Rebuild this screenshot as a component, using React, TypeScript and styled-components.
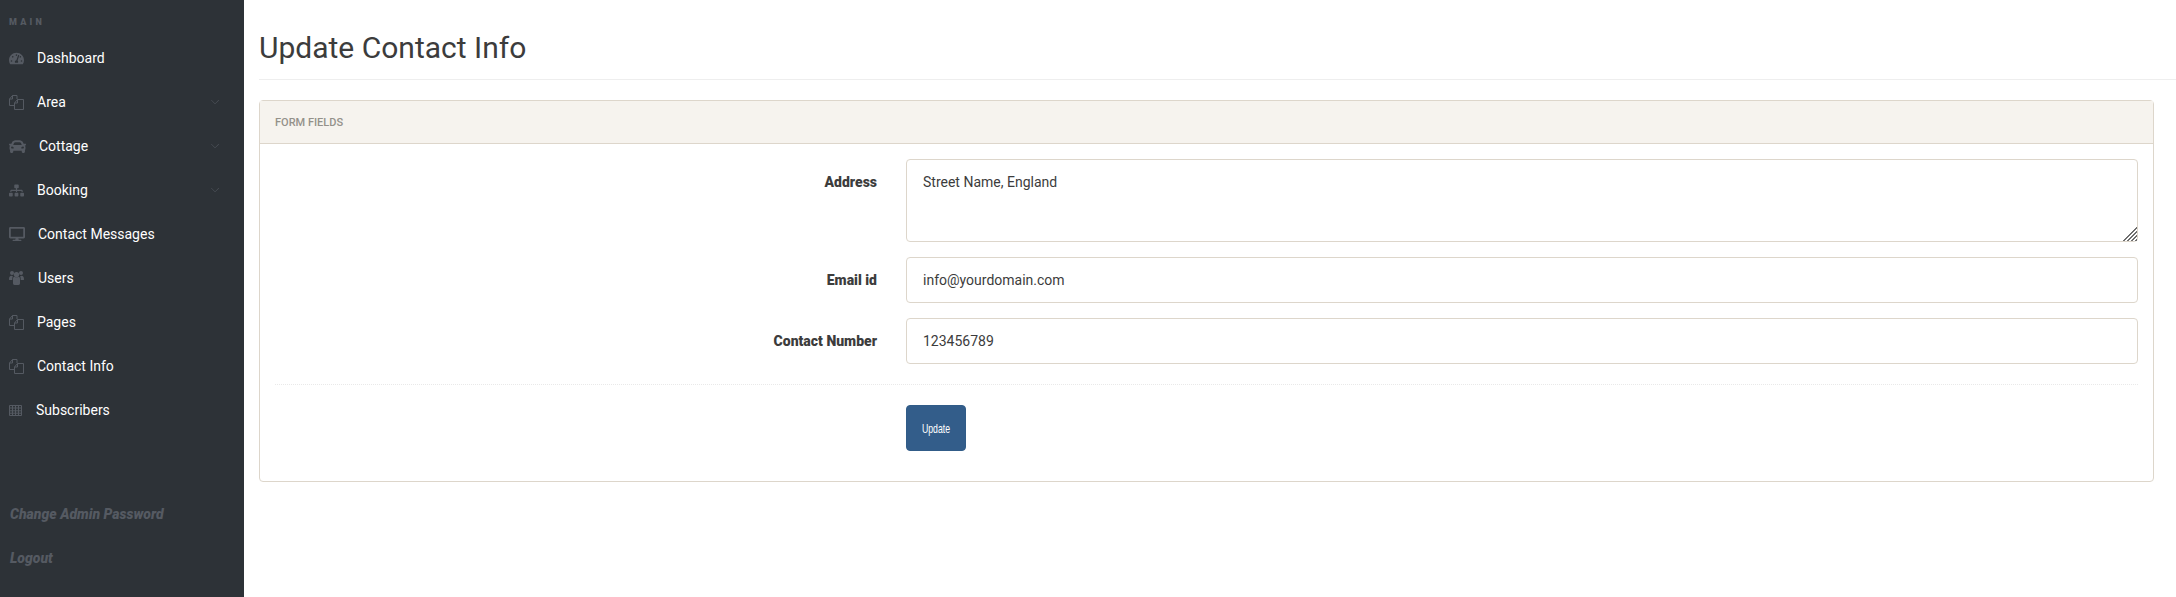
import React from "react";
import styled, { createGlobalStyle } from "styled-components";
import { FaTachometerAlt, FaCar, FaSitemap, FaDesktop } from "react-icons/fa";
import { SlArrowDown } from "react-icons/sl";

const GlobalStyle = createGlobalStyle`
  html, body {
    margin: 0;
    height: 100%;
    background: #fff;
    font-family: Roboto, "Liberation Sans", sans-serif;
    font-size: 14px;
    color: #3c3c3c;
  }
  * { box-sizing: border-box; }
`;

const Page = styled.div`
  display: flex;
  height: 597px;
  overflow: hidden;
`;

const Sidebar = styled.aside`
  width: 244px;
  flex: none;
  background: #2d3237;
  display: flex;
  flex-direction: column;
  padding-top: 17px;
`;

const SectionLabel = styled.div`
  padding-left: 9px;
  height: 11px;
  line-height: 11px;
  font-size: 9px;
  font-weight: 900;
  letter-spacing: 3.2px;
  color: #555a62;
  margin-bottom: 8px;
`;

const NavList = styled.nav`
  display: flex;
  flex-direction: column;
`;

const NavRow = styled.a`
  display: flex;
  align-items: center;
  height: 44px;
  padding: 0 25px 0 9px;
  gap: 13px;
  color: #fff;
  font-size: 14px;
  text-decoration: none;
`;

const NavIcon = styled.span<{ $width: number }>`
  display: flex;
  align-items: center;
  width: ${({ $width }) => $width}px;
  color: #555a62;
  font-size: 15px;
  flex: none;
`;

const NavText = styled.span`
  flex: 1;
`;

const Chevron = styled.span`
  display: flex;
  color: #50555c;
  font-size: 8px;
`;

const BottomLinks = styled.div`
  margin-top: 60px;
  display: flex;
  flex-direction: column;
`;

const BottomLink = styled.a`
  height: 44px;
  line-height: 44px;
  padding-left: 10px;
  font-size: 14px;
  font-weight: 900;
  font-style: italic;
  color: #555a62;
`;

const Main = styled.main`
  flex: 1;
  min-width: 0;
  padding-left: 15px;
`;

const TitleBar = styled.header`
  height: 80px;
  padding-top: 28px;
  border-bottom: 1px solid #eeeeee;
`;

const Title = styled.h1`
  margin: 0;
  font-size: 30px;
  line-height: 40px;
  font-weight: 400;
  color: #3c3c3c;
`;

const Panel = styled.section`
  margin: 20px 22px 0 0;
  border: 1px solid #ddd6cb;
  border-radius: 4px;
`;

const PanelHeader = styled.div`
  height: 43px;
  padding-left: 15px;
  display: flex;
  align-items: center;
  background: #f6f3ee;
  border-bottom: 1px solid #ddd6cb;
  font-size: 11px;
  font-weight: 500;
  color: #94918a;
`;

const PanelBody = styled.form`
  padding: 15px 15px 30px 0;
`;

const FormRow = styled.div`
  display: grid;
  grid-template-columns: 617px 1fr;
  column-gap: 29px;
  & + & {
    margin-top: 15px;
  }
`;

const FieldLabel = styled.label`
  text-align: right;
  font-size: 14px;
  font-weight: 900;
  line-height: 20px;
  padding-top: 13px;
  color: #3c3c3c;
`;

const fieldStyles = `
  display: block;
  width: 100%;
  border: 1px solid #ddd6cb;
  border-radius: 4px;
  padding: 12px 16px;
  font-family: Roboto, "Liberation Sans", sans-serif;
  font-size: 14px;
  line-height: 20px;
  color: #3c3c3c;
  background: #fff;
  outline: none;
`;

const TextArea = styled.textarea`
  ${fieldStyles}
  height: 83px;
  resize: vertical;
  &::-webkit-resizer {
    background:
      linear-gradient(135deg, #fff 50%, transparent 50%),
      repeating-linear-gradient(135deg, #6e6e6e 0 1.4px, #fff 1.4px 2.8px);
  }
`;

const TextInput = styled.input`
  ${fieldStyles}
  height: 46px;
`;

const Divider = styled.div`
  border-top: 1px dotted #e9e9e9;
  margin: 20px 0 20px 15px;
`;

const SubmitButton = styled.button`
  display: block;
  width: 60px;
  height: 46px;
  padding: 0;
  border: 1px solid #315c88;
  border-radius: 4px;
  background: #335d8a;
  color: #fff;
  font-family: "Liberation Sans", sans-serif;
  font-size: 13px;
`;

const ButtonLabel = styled.span`
  display: inline-block;
  transform: scaleX(0.67);
`;

const PagesIcon = () => (
  <svg width="15" height="15" viewBox="0 0 15 15" fill="none" stroke="currentColor" strokeWidth="1">
    <path d="M5.5 10.5H.5V4L3.5.5H8V4" />
    <path d="M3.5.5V4H.5" />
    <path d="M5.5 14.5V8L8.5 4.5H14.5V14.5Z" />
    <path d="M8.5 4.5V8H5.5" />
  </svg>
);

const UsersIcon = () => (
  <svg width="15" height="14" viewBox="0 0 15 14" fill="currentColor">
    <circle cx="3" cy="2" r="2" />
    <circle cx="12" cy="2" r="2" />
    <circle cx="7.5" cy="3.6" r="2.7" />
    <path d="M0 8.6C0 6 .8 4.8 2.4 4.8c.6 0 1 .2 1.5.5-.4.7-.6 1.5-.6 2.6v1.2H1C.4 9.1 0 9 0 8.6ZM15 8.6c0-2.6-.8-3.8-2.4-3.8-.6 0-1 .2-1.5.5.4.7.6 1.5.6 2.6v1.2H14c.6 0 1-.1 1-.5Z" />
    <path d="M4 8c0-1.5.6-2.3 1.5-2.3.5.4 1.200.6 2 .6s1.500-.2 2-.6C10.400 5.700 11 6.500 11 8v4.300c0 1-.6 1.700-1.500 1.700h-4C4.600 14 4 13.300 4 12.300Z" />
  </svg>
);

const TableIcon = () => (
  <svg width="13" height="11" viewBox="0 0 13 11" fill="none" stroke="currentColor" strokeWidth="1">
    <path d="M.5.5h12v10H.5ZM.5 3h12M.5 5.800h12M.5 8.200h12M3.500.5v10M6.500.5v10M9.500.5v10" />
  </svg>
);

const navItems = [
  { label: "Dashboard", icon: <FaTachometerAlt />, width: 15 },
  { label: "Area", icon: <PagesIcon />, width: 15, sub: true },
  { label: "Cottage", icon: <FaCar size={17} />, width: 17, sub: true },
  { label: "Booking", icon: <FaSitemap />, width: 15, sub: true },
  { label: "Contact Messages", icon: <FaDesktop size={16} />, width: 16 },
  { label: "Users", icon: <UsersIcon />, width: 16 },
  { label: "Pages", icon: <PagesIcon />, width: 15 },
  { label: "Contact Info", icon: <PagesIcon />, width: 15 },
  { label: "Subscribers", icon: <TableIcon />, width: 14 },
];

const App: React.FC = () => (
  <Page>
    <GlobalStyle />
    <Sidebar>
      <SectionLabel>MAIN</SectionLabel>
      <NavList>
        {navItems.map((item) => (
          <NavRow key={item.label}>
            <NavIcon $width={item.width}>{item.icon}</NavIcon>
            <NavText>{item.label}</NavText>
            {item.sub && (
              <Chevron>
                <SlArrowDown />
              </Chevron>
            )}
          </NavRow>
        ))}
      </NavList>
      <BottomLinks>
        <BottomLink>Change Admin Password</BottomLink>
        <BottomLink>Logout</BottomLink>
      </BottomLinks>
    </Sidebar>
    <Main>
      <TitleBar>
        <Title>Update Contact Info</Title>
      </TitleBar>
      <Panel>
        <PanelHeader>FORM FIELDS</PanelHeader>
        <PanelBody>
          <FormRow>
            <FieldLabel>Address</FieldLabel>
            <TextArea defaultValue="Street Name, England" />
          </FormRow>
          <FormRow>
            <FieldLabel>Email id</FieldLabel>
            <TextInput defaultValue="info@yourdomain.com" />
          </FormRow>
          <FormRow>
            <FieldLabel>Contact Number</FieldLabel>
            <TextInput defaultValue="123456789" />
          </FormRow>
          <Divider />
          <FormRow>
            <span />
            <SubmitButton type="button">
              <ButtonLabel>Update</ButtonLabel>
            </SubmitButton>
          </FormRow>
        </PanelBody>
      </Panel>
    </Main>
  </Page>
);

export default App;
